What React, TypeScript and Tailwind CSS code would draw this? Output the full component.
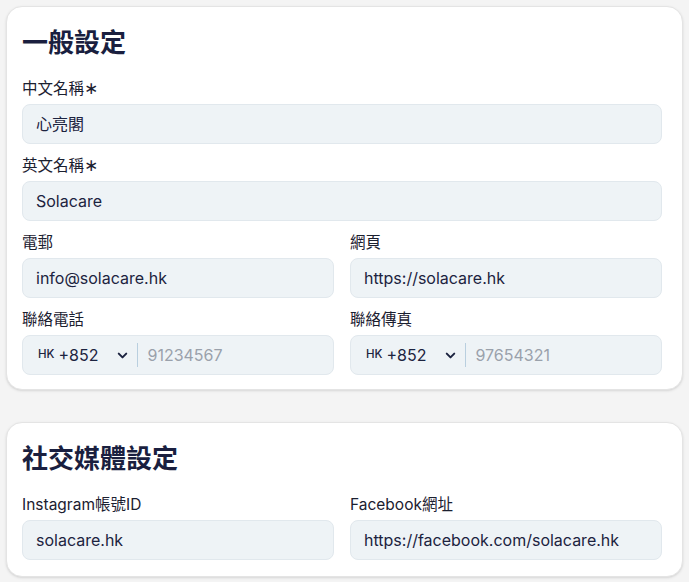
import { ChevronDown } from 'lucide-react'

const font = { fontFamily: 'Inter, "Noto Sans CJK TC", sans-serif' }

function Label({ text, required }: { text: string, required?: boolean }) {
  return (
    <label className="h-5 text-[15.5px] leading-5 text-[#1b2030]">
      {text}
      {required && <span className="text-[17px] leading-none" style={{ fontFamily: '"DejaVu Sans", sans-serif' }}>∗</span>}
    </label>
  )
}

function Field({ label, value, required }: { label: string, value: string, required?: boolean }) {
  return (
    <div className="flex flex-col gap-[5px]">
      <Label text={label} required={required} />
      <div className="h-10 flex items-center px-[13px] rounded-lg border border-[#e1e8ed] bg-[#eef3f6] text-[16px] text-[#1c2340]">
        {value}
      </div>
    </div>
  )
}

function PhoneField({ label, placeholder }: { label: string, placeholder: string }) {
  return (
    <div className="flex flex-col gap-[5px]">
      <Label text={label} />
      <div className="h-10 flex items-center pl-[15px] rounded-lg border border-[#e1e8ed] bg-[#eef3f6] text-[16px] text-[#1c2340]">
        <span className="text-[11.5px] font-medium mr-1">HK</span>
        <span>+852</span>
        <ChevronDown className="ml-[17px] w-[15px] h-[15px] text-[#1c2340]" strokeWidth={3.2} />
        <div className="ml-[7px] w-px h-6 bg-[#b9cfdf]" />
        <span className="ml-[9px] text-[#9aa1ab]">{placeholder}</span>
      </div>
    </div>
  )
}

export default function App() {
  return (
    <div className="min-h-screen bg-[#f4f4f4] p-[6px] flex flex-col gap-8" style={font}>
      {/* 一般設定 */}
      <div className="bg-white border border-[#e4e4e4] rounded-2xl pt-4 pl-[15px] pr-5 pb-[14px] shadow-sm">
        <h2 className="text-[26px] leading-9 font-bold text-[#1a1f3f] pt-[2px] mb-[18px]">一般設定</h2>
        <div className="flex flex-col gap-3">
          <Field label="中文名稱" required value="心亮閣" />
          <Field label="英文名稱" required value="Solacare" />
          <div className="grid grid-cols-2 gap-4">
            <Field label="電郵" value="info@solacare.hk" />
            <Field label="網頁" value="https://solacare.hk" />
          </div>
          <div className="grid grid-cols-2 gap-4">
            <PhoneField label="聯絡電話" placeholder="91234567" />
            <PhoneField label="聯絡傳真" placeholder="97654321" />
          </div>
        </div>
      </div>

      {/* 社交媒體設定 */}
      <div className="bg-white border border-[#e4e4e4] rounded-2xl pt-4 pl-[15px] pr-5 pb-4 shadow-sm">
        <h2 className="text-[26px] leading-9 font-bold text-[#1a1f3f] pt-[2px] mb-[18px]">社交媒體設定</h2>
        <div className="grid grid-cols-2 gap-4">
          <Field label="Instagram帳號ID" value="solacare.hk" />
          <Field label="Facebook網址" value="https://facebook.com/solacare.hk" />
        </div>
      </div>
    </div>
  )
}
